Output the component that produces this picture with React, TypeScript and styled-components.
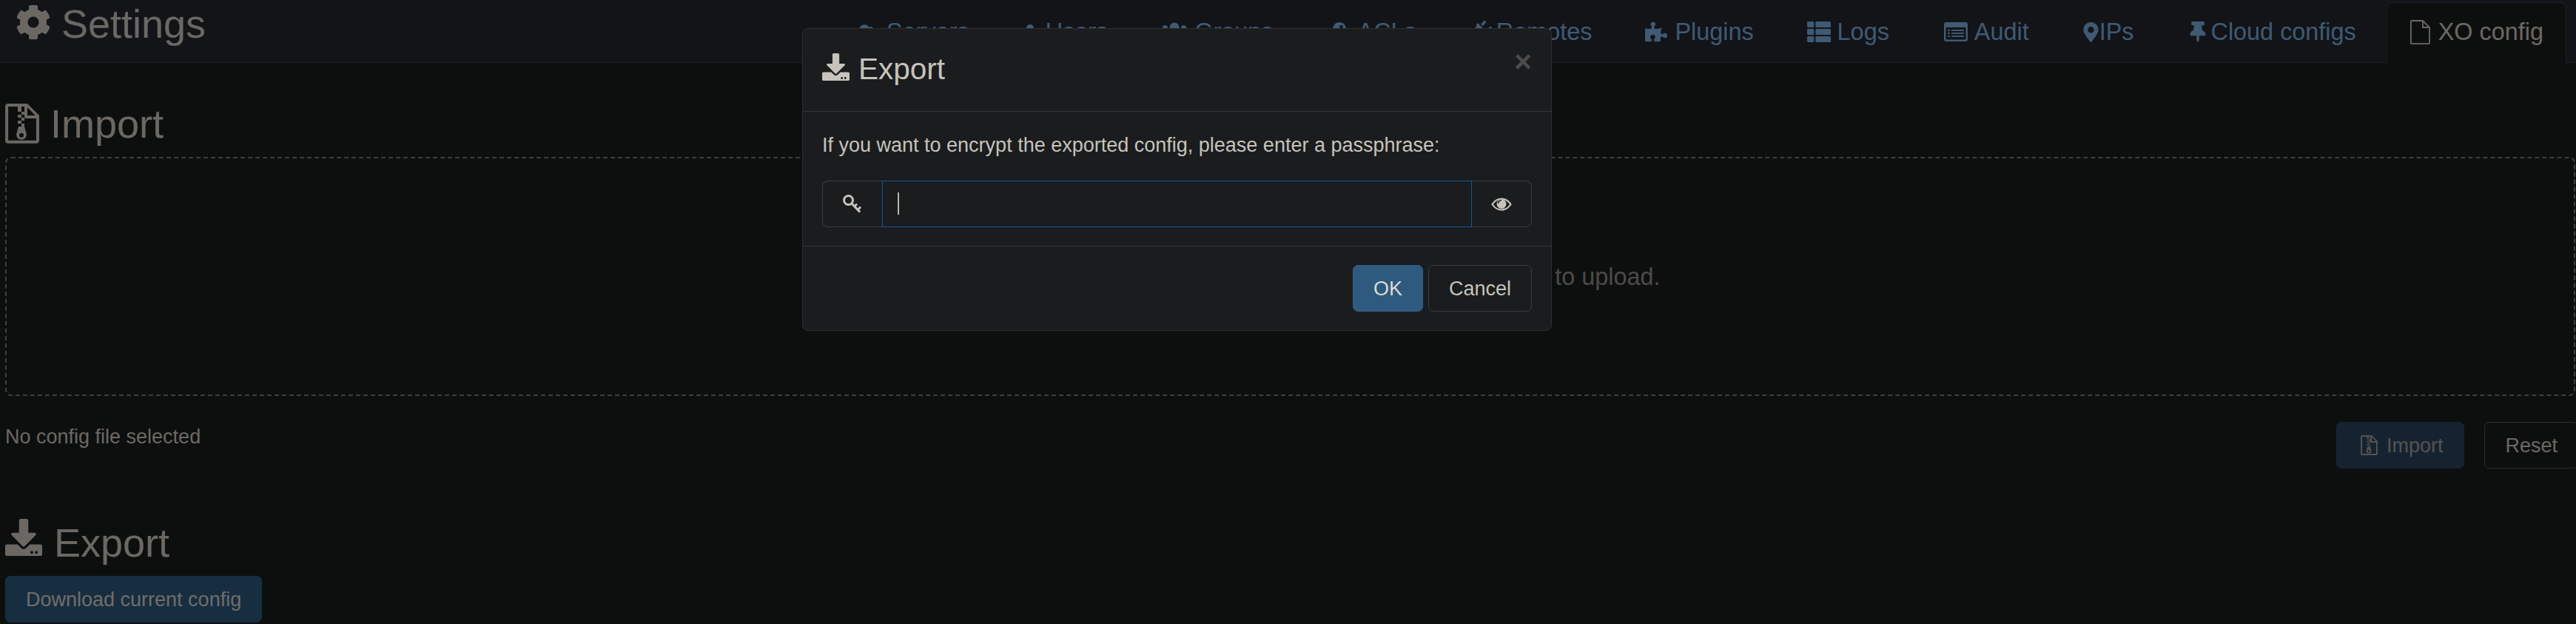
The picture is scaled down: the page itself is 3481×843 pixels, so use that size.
import React from 'react';
import styled, { createGlobalStyle } from 'styled-components';
import {
  FaCloud,
  FaCog,
  FaDownload,
  FaKey,
  FaMapMarkerAlt,
  FaPlug,
  FaPuzzlePiece,
  FaThList,
  FaThumbtack,
  FaUser,
  FaUsers,
} from 'react-icons/fa';

const GlobalStyle = createGlobalStyle`
  html, body {
    margin: 0;
    height: 100%;
    overflow: hidden;
    background: #1a1e1e;
  }
  body {
    color: #d6d0c8;
    font-family: 'Liberation Sans', Arial, sans-serif;
    font-size: 27px;
    line-height: 40px;
  }
  * {
    box-sizing: border-box;
  }
`;

const ZipIcon = ({ size }: { size: number }) => (
  <svg width={size} height={size * 1.17} viewBox="0 0 46 54" fill="currentColor">
    <path
      fillRule="evenodd"
      d="M4 0h26l16 16v34a4 4 0 0 1-4 4H4a4 4 0 0 1-4-4V4a4 4 0 0 1 4-4zm0 4v46h38V20H28a2 2 0 0 1-2-2V4h-4v3h-5V4H4zm26 1v11h11L30 5z"
    />
    <path d="M17 7h5v4h-5zM22 11h4v4h-4zM17 15h5v4h-5zM22 19h4v4h-4zM17 23h5v4h-5zM22 27h4v4h-4z" />
    <path
      fillRule="evenodd"
      d="M18 31h8l3 11a7 7 0 1 1-14 0l3-11zm4 9a3 3 0 1 0 0 6 3 3 0 0 0 0-6z"
    />
  </svg>
);

const FileIcon = () => (
  <svg width="28" height="33" viewBox="0 0 28 33" fill="none" stroke="currentColor" strokeWidth="1.8">
    <path d="M2.900 1H18l9 9v21.100a1 1 0 0 1-1 1H2.900a1 1 0 0 1-1-1V2a1 1 0 0 1 1-1z" />
    <path d="M18 1v9h9" />
  </svg>
);

const ListAltIcon = () => (
  <svg width="34" height="26" viewBox="-2 0 34 26" fill="currentColor">
    <path
      fillRule="evenodd"
      d="M3 0h26a3 3 0 0 1 3 3v20a3 3 0 0 1-3 3H3a3 3 0 0 1-3-3V3a3 3 0 0 1 3-3zm-.5 7v16l.5.5h26l.5-.5V7h-27z"
    />
    <path d="M5 10h3v2H5zM10 10h17v2H10zM5 14h3v2H5zM10 14h17v2H10zM5 18h3v2H5zM10 18h17v2H10z" />
  </svg>
);

const PassKeyIcon = () => (
  <svg width="26" height="25" viewBox="0 0 26 25" fill="none" stroke="currentColor">
    <circle cx="7.500" cy="7.500" r="6" strokeWidth="3" />
    <path d="M11.500 11.500L23 23.500" strokeWidth="3.200" />
    <path d="M15.500 16l3.500-3.500M20 20.500l4-4" strokeWidth="3" />
  </svg>
);

const EyeIcon = () => (
  <svg width="28" height="18" viewBox="0 0 28 18">
    <path
      d="M1.500 9C5 3.800 9.200 1.500 14 1.500S23 3.800 26.500 9C23 14.200 18.800 16.500 14 16.500S5 14.200 1.500 9z"
      fill="none"
      stroke="currentColor"
      strokeWidth="2.200"
    />
    <circle cx="14" cy="8.500" r="6.500" fill="currentColor" />
    <path d="M9.500 8c0-2.500 2-4.500 4.500-4.500" fill="none" stroke="#1a1c1e" strokeWidth="1.600" />
  </svg>
);

function RotatedPlug({ size }: { size: number }) {
  return <FaPlug size={size} style={{ transform: 'rotate(45deg)' }} />;
}

const tabs = [
  { label: 'Servers', width: 41, icon: <FaCloud size={28} /> },
  { label: 'Users', width: 31, icon: <FaUser size={20} /> },
  { label: 'Groups', width: 45, icon: <FaUsers size={36} /> },
  { label: 'ACLs', width: 42, icon: <FaKey size={26} /> },
  { label: 'Remotes', width: 36, icon: <RotatedPlug size={30} /> },
  { label: 'Plugins', width: 40, icon: <FaPuzzlePiece size={30} /> },
  { label: 'Logs', width: 41, icon: <FaThList size={32} /> },
  { label: 'Audit', width: 43, icon: <ListAltIcon /> },
  { label: 'IPs', width: 23, icon: <FaMapMarkerAlt size={27} /> },
  { label: 'Cloud configs', width: 32, icon: <FaThumbtack size={28} /> },
  { label: 'XO config', width: 39, icon: <FileIcon />, active: true },
];

const App = () => (
  <>
    <GlobalStyle />
    <Header>
      <PageTitle>
        <FaCog size={48} />
        Settings
      </PageTitle>
      <TabList>
        {tabs.map((tab) => (
          <Tab key={tab.label} $active={tab.active}>
            <TabIcon $width={tab.width}>{tab.icon}</TabIcon>
            {tab.label}
          </Tab>
        ))}
      </TabList>
    </Header>

    <Content>
      <SectionTitle>
        <ZipIcon size={46} />
        Import
      </SectionTitle>
      <DropZone>Try dropping a config file here, or click to select a config file to upload.</DropZone>
      <ImportRow>
        <span>No config file selected</span>
        <ImportActions>
          <DisabledButton>
            <ZipIcon size={23} />
            Import
          </DisabledButton>
          <OutlineButton>Reset</OutlineButton>
        </ImportActions>
      </ImportRow>
      <ExportTitle>
        <FaDownload size={50} />
        Export
      </ExportTitle>
      <PrimaryButton>Download current config</PrimaryButton>
    </Content>

    <Backdrop />
    <Modal>
      <ModalHeader>
        <ModalTitle>
          <FaDownload size={37} />
          Export
        </ModalTitle>
        <CloseButton>×</CloseButton>
      </ModalHeader>
      <ModalBody>
        <p>If you want to encrypt the exported config, please enter a passphrase:</p>
        <InputGroup>
          <Addon $side="left">
            <PassKeyIcon />
          </Addon>
          <InputWrap>
            <PassInput type="password" readOnly />
            <Caret />
          </InputWrap>
          <Addon $side="right">
            <EyeIcon />
          </Addon>
        </InputGroup>
      </ModalBody>
      <ModalFooter>
        <PrimaryButton>OK</PrimaryButton>
        <OutlineButton>Cancel</OutlineButton>
      </ModalFooter>
    </Modal>
  </>
);

export default App;

const Header = styled.header`
  display: flex;
  justify-content: space-between;
  align-items: flex-end;
  height: 85px;
  padding: 0 13px 0 21px;
  background: #24282e;
  border-bottom: 1px solid #3c4044;
`;

const PageTitle = styled.h1`
  display: flex;
  align-items: flex-start;
  gap: 14px;
  align-self: flex-start;
  margin: 0;
  font-size: 54px;
  font-weight: 400;
  line-height: 64px;

  svg {
    margin-top: 6px;
  }
`;

const TabList = styled.nav`
  display: flex;
  gap: 10px;
  margin-bottom: -1px;
`;

const Tab = styled.a<{ $active?: boolean }>`
  display: flex;
  align-items: flex-start;
  height: 82px;
  padding: 15px 30px 0;
  color: ${(p) => (p.$active ? '#d6d0c8' : '#7eb4e6')};
  font-size: 32.4px;
  line-height: 48px;
  background: ${(p) => (p.$active ? '#1a1e1e' : 'transparent')};
  border: 1px solid ${(p) => (p.$active ? '#3c4044' : 'transparent')};
  border-bottom: 0;
  border-radius: 8px 8px 0 0;
`;

const TabIcon = styled.span<{ $width: number }>`
  display: flex;
  align-items: center;
  flex: none;
  width: ${(p) => p.$width}px;
  height: 48px;
`;

const Content = styled.main`
  padding: 50px 1px 0 7px;
`;

const SectionTitle = styled.h2`
  display: flex;
  align-items: center;
  gap: 15px;
  margin: 0;
  font-size: 54px;
  font-weight: 400;
  line-height: 64px;
`;

const ExportTitle = styled(SectionTitle)`
  gap: 16px;
  margin: 68px 0 13px;

  svg {
    margin-top: -14px;
  }
`;

const DropZone = styled.div`
  display: flex;
  align-items: center;
  justify-content: center;
  height: 323px;
  margin-top: 13px;
  color: #989490;
  font-size: 32.4px;
  border: 2px dashed #7c7c7c;
  border-radius: 8px;
`;

const ImportRow = styled.div`
  display: flex;
  justify-content: space-between;
  margin-top: 35px;
`;

const ImportActions = styled.div`
  display: flex;
  gap: 27px;
  margin-right: -4px;
`;

const BaseButton = styled.button`
  display: inline-flex;
  align-items: center;
  height: 63px;
  padding: 0 27px;
  font-family: inherit;
  font-size: 27px;
  line-height: 40px;
  border-radius: 7px;
`;

const PrimaryButton = styled(BaseButton)`
  color: #dedbd4;
  background: #2e5a80;
  border: 1px solid #2e5f88;
`;

const DisabledButton = styled(BaseButton)`
  gap: 12px;
  padding: 0 28px 0 32px;
  color: #a8a6a0;
  background: #2a4662;
  border: 1px solid #2a4662;
`;

const OutlineButton = styled(BaseButton)`
  color: #d6d0c8;
  background: transparent;
  border: 1px solid #565656;
`;

const Backdrop = styled.div`
  position: fixed;
  inset: 0;
  background: rgba(0, 0, 0, 0.5);
`;

const Modal = styled.section`
  position: fixed;
  top: 38px;
  left: 1084px;
  width: 1013px;
  height: 409px;
  color: #c6c3bb;
  background: #1a1c1e;
  border: 1px solid #2c2e30;
  border-radius: 8px;

  ${OutlineButton} {
    color: #c6c3bb;
    border-color: #3b3d3f;
  }
`;

const ModalHeader = styled.div`
  display: flex;
  justify-content: space-between;
  height: 112px;
  padding: 30px 26px 0;
  border-bottom: 1px solid #333638;
`;

const ModalTitle = styled.h3`
  display: flex;
  align-items: center;
  gap: 12px;
  height: 48px;
  margin: 0;
  font-size: 40.5px;
  font-weight: 400;
  line-height: 48px;

  svg {
    margin-top: -6px;
  }
`;

const CloseButton = styled.span`
  height: 48px;
  margin-top: -6px;
  color: #4a4b4c;
  font-size: 40.5px;
  font-weight: 700;
  line-height: 40px;
`;

const ModalBody = styled.div`
  height: 182px;
  padding: 25px 26px 0;
  border-bottom: 1px solid #333638;

  p {
    margin: 0 0 28px;
  }
`;

const InputGroup = styled.div`
  display: flex;
  height: 63px;
`;

const Addon = styled.div<{ $side: 'left' | 'right' }>`
  display: flex;
  flex: none;
  align-items: center;
  justify-content: center;
  width: 81px;
  border: 1px solid #3b3d3f;
  border-${(p) => (p.$side === 'left' ? 'right' : 'left')}: 0;
  border-radius: ${(p) => (p.$side === 'left' ? '8px 0 0 8px' : '0 8px 8px 0')};
`;

const InputWrap = styled.div`
  position: relative;
  flex: 1;
`;

const PassInput = styled.input`
  display: block;
  width: 100%;
  height: 100%;
  padding: 0 20px;
  color: inherit;
  background: transparent;
  border: 1px solid #0d5a9c;
  outline: 0;
  caret-color: transparent;
`;

const Caret = styled.span`
  position: absolute;
  top: 16px;
  left: 21px;
  width: 2px;
  height: 30px;
  background: #b9b6af;
`;

const ModalFooter = styled.div`
  display: flex;
  justify-content: flex-end;
  gap: 7px;
  padding: 25px 26px 0;
`;
